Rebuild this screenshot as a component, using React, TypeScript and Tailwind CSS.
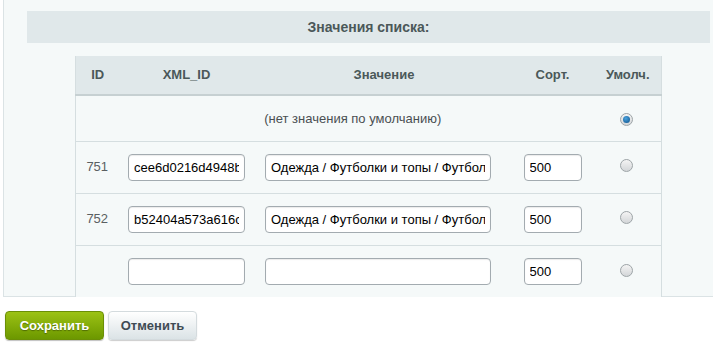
import React, { useState } from "react";

type Row = { id: string; xml: string; value: string; sort: string };

const rows: Row[] = [
  { id: "751", xml: "cee6d0216d4948b9a1", value: "Одежда / Футболки и топы / Футболки", sort: "500" },
  { id: "752", xml: "b52404a573a616c3d2", value: "Одежда / Футболки и топы / Футболки", sort: "500" },
  { id: "", xml: "", value: "", sort: "500" },
];

const Radio: React.FC<{ checked: boolean; onClick: () => void }> = ({ checked, onClick }) => (
  <button
    onClick={onClick}
    className="inline-flex items-center justify-center w-[13px] h-[13px] rounded-full border border-[#9ea5a8] bg-gradient-to-b from-[#f4f4f4] to-[#d3d6d8]"
  >
    {checked && (
      <span className="block w-[7px] h-[7px] rounded-full bg-[radial-gradient(circle_at_40%_35%,#4aa3df,#0b4f88)]" />
    )}
  </button>
);

const inputCls =
  "h-[27px] rounded-[4px] border border-[#a3abb0] bg-white px-[5px] text-[13px] text-black outline-none shadow-[inset_0_1px_1px_rgba(0,0,0,0.08)]";

export default function App() {
  const [def, setDef] = useState<number>(-1);
  const [data, setData] = useState<Row[]>(rows);

  const update = (i: number, key: keyof Row, v: string) =>
    setData((prev) => prev.map((r, idx) => (idx === i ? { ...r, [key]: v } : r)));

  return (
    <div className="w-[713px] h-[347px] bg-white font-['Liberation_Sans',Arial,sans-serif] overflow-hidden">
      <div className="ml-[3px] h-[297px] bg-[#f5f9f9] border-l border-b border-[#dbe3e5] pt-[11px] pl-[23px]">
        <div className="h-[32px] w-[683px] bg-[#e0e8ea] flex items-center justify-center text-[14px] font-bold text-[#4b5859]">
          Значения списка:
        </div>
        <div className="mt-[13px] ml-[48px] w-[586px]">
          <table className="table-fixed w-full border-collapse text-[13px]">
            <colgroup>
              <col className="w-[43px]" />
              <col className="w-[136px]" />
              <col className="w-[247px]" />
              <col className="w-[102px]" />
              <col className="w-[58px]" />
            </colgroup>
            <thead>
              <tr className="h-[39px] bg-[#e0e8ea] text-[#4b5859] font-bold border-b-2 border-[#c6d0d2]">
                <th className="border-l border-[#d5dee0] pl-[1px]">ID</th>
                <th>XML_ID</th>
                <th className="pl-[12px]">Значение</th>
                <th>Сорт.</th>
                <th className="border-r border-[#d5dee0] pr-[9px]">Умолч.</th>
              </tr>
            </thead>
            <tbody className="bg-[#f5f9f9] text-[#4a4f52]">
              <tr className="h-[46px] border-b border-[#d5dee0]">
                <td colSpan={4} className="border-l border-[#d5dee0] text-center pl-[26px] text-[#4a4f52]">
                  (нет значения по умолчанию)
                </td>
                <td className="border-r border-[#d5dee0] text-center pr-[12px]">
                  <Radio checked={def === -1} onClick={() => setDef(-1)} />
                </td>
              </tr>
              {data.map((r, i) => (
                <tr
                  key={i}
                  className={`h-[52px] ${i < data.length - 1 ? "border-b border-[#d5dee0]" : ""}`}
                >
                  <td className="border-l border-[#d5dee0] text-center text-[#5a5f62]">{r.id}</td>
                  <td className="text-center">
                    <input
                      className={`${inputCls} w-[117px]`}
                      value={r.xml}
                      onChange={(e) => update(i, "xml", e.target.value)}
                    />
                  </td>
                  <td className="text-center">
                    <input
                      className={`${inputCls} w-[226px]`}
                      value={r.value}
                      onChange={(e) => update(i, "value", e.target.value)}
                    />
                  </td>
                  <td className="text-center">
                    <input
                      className={`${inputCls} w-[58px]`}
                      value={r.sort}
                      onChange={(e) => update(i, "sort", e.target.value)}
                    />
                  </td>
                  <td className="border-r border-[#d5dee0] text-center pr-[12px]">
                    <Radio checked={def === i} onClick={() => setDef(i)} />
                  </td>
                </tr>
              ))}
            </tbody>
          </table>
        </div>
      </div>
      <div className="flex gap-[4px] pl-[5px] pt-[14px]">
        <button className="h-[29px] w-[99px] rounded-[4px] border border-[#6b8f06] bg-gradient-to-b from-[#9cc214] to-[#6c9800] text-white font-bold text-[13px] [text-shadow:0_1px_1px_rgba(0,0,0,0.35)] shadow-[0_1px_1px_rgba(0,0,0,0.25)]">
          Сохранить
        </button>
        <button className="h-[29px] w-[89px] rounded-[4px] border border-[#d4dbde] bg-gradient-to-b from-[#ffffff] to-[#dbe3e6] text-[#3f4b54] font-bold text-[13px] shadow-[0_1px_1px_rgba(0,0,0,0.2)]">
          Отменить
        </button>
      </div>
    </div>
  );
}
